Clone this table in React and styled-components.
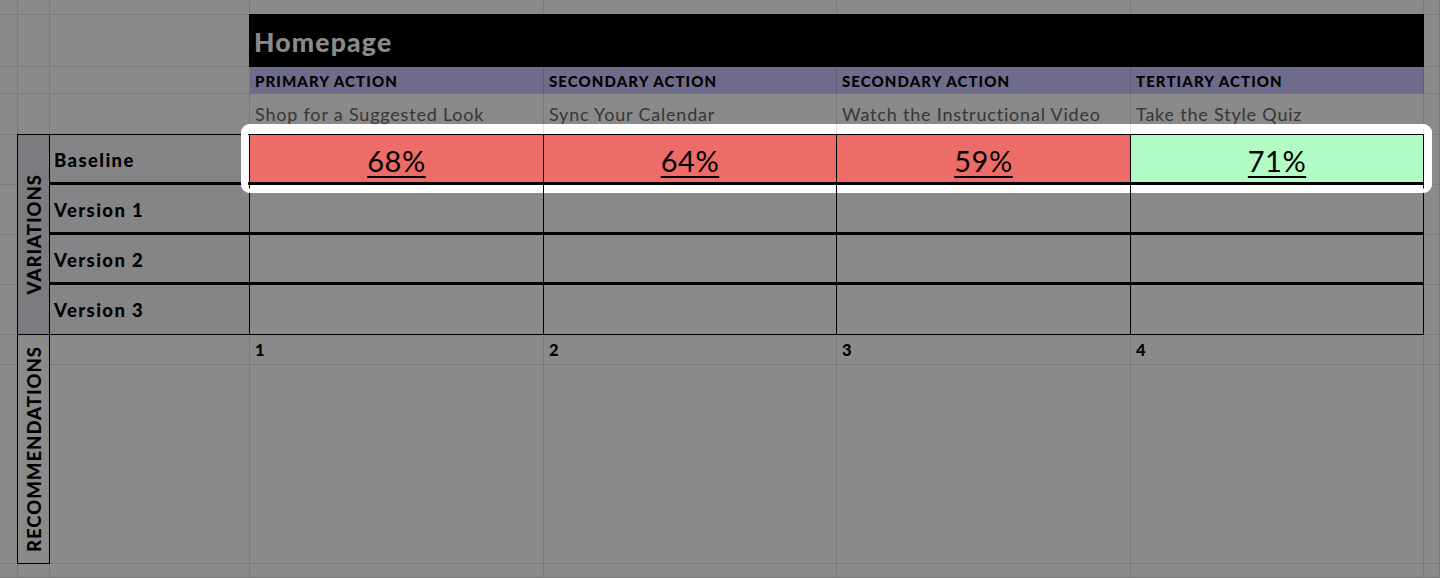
import React from "react";
import styled, { createGlobalStyle } from "styled-components";

const GlobalStyle = createGlobalStyle`
  html, body {
    margin: 0;
    padding: 0;
    background: #ffffff;
    overflow: hidden;
  }
  body {
    font-family: Lato, "Open Sans", sans-serif;
  }
`;

const COLS = ["18px", "32px", "200px", "294px", "293px", "294px", "293px", "1fr"];
const ROWS = ["15px", "52px", "27px", "41px", "50px", "50px", "50px", "50px", "30px", "199px", "1fr"];

const actions = [
  { kind: "PRIMARY ACTION", label: "Shop for a Suggested Look", score: "68%", good: false },
  { kind: "SECONDARY ACTION", label: "Sync Your Calendar", score: "64%", good: false },
  { kind: "SECONDARY ACTION", label: "Watch the Instructional Video", score: "59%", good: false },
  { kind: "TERTIARY ACTION", label: "Take the Style Quiz", score: "71%", good: true },
];

const versions = ["Baseline", "Version 1", "Version 2", "Version 3"];

const Sheet = styled.div`
  display: grid;
  grid-template-columns: ${COLS.join(" ")};
  grid-template-rows: ${ROWS.join(" ")};
  height: 100vh;
  width: 100vw;
  position: relative;
`;

const GridCell = styled.div`
  grid-column: ${(p) => p.$col};
  grid-row: ${(p) => p.$row};
  border-right: 1px solid #e2e2e2;
  border-bottom: 1px solid #e2e2e2;
  box-sizing: border-box;
`;

const Header = styled.div`
  grid-column: 4 / 8;
  grid-row: 2;
  margin: -1px 0 0 -1px;
  background: #000;
  color: #ffffff;
  font-weight: 900;
  font-size: 26.5px;
  letter-spacing: 1.2px;
  display: flex;
  align-items: center;
  padding-left: 5px;
  padding-top: 2px;
`;

const ActionKind = styled.div`
  grid-column: ${(p) => p.$col};
  grid-row: 3;
  background: #cdc6ff;
  border-right: 1px solid #b0aadb;
  box-sizing: border-box;
  font-weight: 900;
  font-size: 15px;
  letter-spacing: 1.1px;
  color: #000;
  display: flex;
  align-items: center;
  padding-left: 5px;
  padding-top: 1px;
`;

const ActionLabel = styled.div`
  grid-column: ${(p) => p.$col};
  grid-row: 4;
  font-size: 18px;
  letter-spacing: 0.8px;
  color: #666666;
  display: flex;
  align-items: center;
  padding-left: 5px;
  padding-bottom: 1px;
`;

const SideLabel = styled.div`
  grid-column: 2;
  grid-row: ${(p) => p.$row};
  margin: -1px 0 0 -1px;
  background: ${(p) => p.$bg};
  border: 1px solid #000;
  display: flex;
  align-items: center;
  justify-content: center;
`;

const Vertical = styled.span`
  writing-mode: vertical-rl;
  transform: rotate(180deg);
  font-weight: 900;
  font-size: 18.5px;
  letter-spacing: 1px;
  color: #000;
`;

const VersionLabel = styled.div`
  grid-column: 3;
  grid-row: ${(p) => p.$row};
  margin-top: ${(p) => (p.$first ? "-1px" : "0")};
  background: #f6f6fc;
  border-top: ${(p) => (p.$first ? "1px solid #000" : "none")};
  border-right: 1px solid #000;
  border-bottom: ${(p) => (p.$last ? "1px" : "3px")} solid #000;
  display: flex;
  align-items: center;
  padding-left: 4px;
  padding-top: ${(p) => (p.$last ? "0" : "2px")};
  font-weight: 900;
  font-size: 18.5px;
  letter-spacing: 1.4px;
  color: #000;
`;

const DataCell = styled.div`
  grid-column: ${(p) => p.$col};
  grid-row: ${(p) => p.$row};
  margin-top: ${(p) => (p.$first ? "-1px" : "0")};
  background: ${(p) => p.$bg || "#ffffff"};
  border-top: ${(p) => (p.$first ? "1px solid #000" : "none")};
  border-right: 1px solid #000;
  border-bottom: ${(p) => (p.$last ? "1px" : "3px")} solid #000;
  display: flex;
  align-items: center;
  justify-content: center;
`;

const Score = styled.span`
  font-size: 29px;
  letter-spacing: 0.5px;
  color: #000;
  text-decoration: underline;
  text-decoration-thickness: 1.5px;
  text-underline-offset: 4px;
  padding-top: 3px;
`;

const RecNumber = styled.div`
  grid-column: ${(p) => p.$col};
  grid-row: 9;
  font-weight: 900;
  font-size: 16.5px;
  color: #000;
  padding: 5px 0 0 5px;
`;

const SpotlightAnchor = styled.div`
  grid-column: 4 / 8;
  grid-row: 5;
  position: relative;
  pointer-events: none;
  z-index: 10;
`;

const Spotlight = styled.div`
  position: absolute;
  top: -11px;
  bottom: -8px;
  left: -9px;
  right: -8px;
  border-radius: 9px;
  box-shadow: 0 0 0 3000px rgba(0, 0, 0, 0.46), inset 7px 0 0 #ffffff,
    inset -7px 0 0 #ffffff;
`;

export default function App() {
  const background = [];
  ROWS.forEach((_, r) => {
    COLS.forEach((__, c) => {
      background.push(<GridCell key={`${r}-${c}`} $row={r + 1} $col={c + 1} />);
    });
  });

  return (
    <>
      <GlobalStyle />
      <Sheet>
        {background}

        <Header>Homepage</Header>

        {actions.map((a, i) => (
          <ActionKind key={`k${i}`} $col={i + 4}>
            {a.kind}
          </ActionKind>
        ))}
        {actions.map((a, i) => (
          <ActionLabel key={`l${i}`} $col={i + 4}>
            {a.label}
          </ActionLabel>
        ))}

        <SideLabel $row="5 / 9" $bg="#e4e4ed">
          <Vertical>VARIATIONS</Vertical>
        </SideLabel>

        {versions.map((v, r) => (
          <React.Fragment key={v}>
            <VersionLabel $row={r + 5} $first={r === 0} $last={r === 3}>
              {v}
            </VersionLabel>
            {actions.map((a, i) => (
              <DataCell
                key={`${v}-${i}`}
                $row={r + 5}
                $col={i + 4}
                $first={r === 0}
                $last={r === 3}
                $bg={r === 0 ? (a.good ? "#b3fbc4" : "#ee6c67") : null}
              >
                {r === 0 && <Score>{a.score}</Score>}
              </DataCell>
            ))}
          </React.Fragment>
        ))}

        <SideLabel $row="9 / 11" $bg="#ffffff">
          <Vertical>RECOMMENDATIONS</Vertical>
        </SideLabel>

        {actions.map((a, i) => (
          <RecNumber key={`n${i}`} $col={i + 4}>
            {i + 1}
          </RecNumber>
        ))}

        <SpotlightAnchor>
          <Spotlight />
        </SpotlightAnchor>
      </Sheet>
    </>
  );
}
